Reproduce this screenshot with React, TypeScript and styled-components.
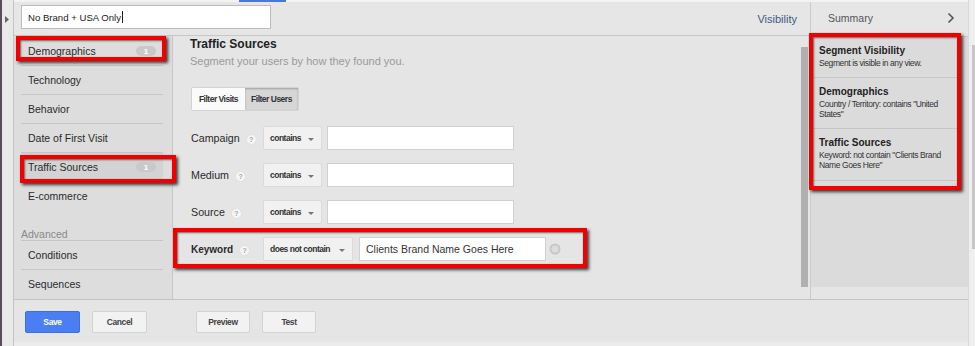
import React from "react";
import styled, { createGlobalStyle } from "styled-components";

const Global = createGlobalStyle`
  html, body {
    margin: 0;
    padding: 0;
    background: #e5e5e5;
    font-family: "Liberation Sans", Arial, sans-serif;
    width: 975px;
    height: 346px;
    overflow: hidden;
  }
  * { box-sizing: border-box; }
`;

const Frame = styled.div`
  display: flex;
  width: 975px;
  height: 346px;
`;

const SideStrip = styled.div`
  width: 14px;
  flex: none;
  background: #e9e9e9;
  border-left: 2px solid #5b4e5b;
  border-right: 1px solid #c4c4c4;
  padding: 9px 0 0 3px;
`;

const RightStrip = styled.div`
  width: 7px;
  flex: none;
  background: #efefef;
  border-left: 1px solid #dadada;
  padding: 45px 0 0 3px;
`;

const RightThumb = styled.div`
  width: 3px;
  height: 204px;
  background: #c6c6c6;
`;

const Window = styled.div`
  flex: 1;
  display: flex;
  flex-direction: column;
  min-width: 0;
`;

const TopEdge = styled.div`
  height: 2px;
  background: #f3f3f3;
  display: flex;
`;

const TabMarker = styled.div`
  margin-left: 225px;
  width: 47px;
  background: #4a78d8;
`;

const Body = styled.div`
  display: flex;
  height: 297px;
`;

const EditorArea = styled.div`
  width: 796px;
  display: flex;
  flex-direction: column;
`;

const TopBar = styled.div`
  height: 35px;
  border-bottom: 1px solid #c8c8c8;
  background: #e6e6e6;
  display: flex;
  justify-content: space-between;
  align-items: flex-start;
  padding: 3px 13px 0 7px;
`;

const NameField = styled.div`
  width: 250px;
  height: 24px;
  background: #fff;
  border: 1px solid #bcbcbc;
  display: flex;
  align-items: center;
  padding-left: 6px;
  font-size: 9.6px;
  color: #222;
`;

const Caret = styled.span`
  display: inline-block;
  width: 1px;
  height: 12px;
  background: #222;
  margin-left: 1px;
`;

const VisibilityLink = styled.span`
  font-size: 11px;
  color: #3c5a84;
  margin-top: 8px;
`;

const Content = styled.div`
  flex: 1;
  display: flex;
`;

const Nav = styled.div`
  width: 159px;
  flex: none;
  background: #dddddd;
  border-right: 1px solid #c8c8c8;
  padding-top: 1px;
`;

const NavItem = styled.div<{ $selected?: boolean; $last?: boolean }>`
  position: relative;
  height: 29px;
  margin: 0 9px 0 7px;
  padding: 0 7px;
  display: flex;
  align-items: center;
  justify-content: space-between;
  font-size: 10.5px;
  color: #2a2a2a;
  background: ${(p) => (p.$selected ? "#d3d3d3" : "transparent")};
  border-bottom: 1px solid ${(p) => (p.$last ? "transparent" : "#c6c6c6")};
`;

const NavSectionLabel = styled.div`
  margin: 0 9px 0 7px;
  padding-top: 17px;
  line-height: 12px;
  font-size: 10.5px;
  color: #8a8a8a;
  border-bottom: 1px solid #c6c6c6;
`;

const Badge = styled.span`
  width: 20px;
  height: 10px;
  border-radius: 5px;
  background: #c9c9c9;
  color: #fff;
  font-size: 8px;
  font-weight: bold;
  display: flex;
  align-items: center;
  justify-content: center;
`;

const RedMark = styled.span<{ $top: number; $left: number; $width: number; $height: number }>`
  position: absolute;
  top: ${(p) => p.$top}px;
  left: ${(p) => p.$left}px;
  width: ${(p) => p.$width}px;
  height: ${(p) => p.$height}px;
  border: 4px solid #f20000;
  box-shadow: 2px 2px 3px rgba(0, 0, 0, 0.75), inset 1px 1px 2px rgba(0, 0, 0, 0.55);
  pointer-events: none;
  z-index: 2;
`;

const Editor = styled.div`
  flex: 1;
  display: flex;
`;

const EditorMain = styled.div`
  flex: 1;
  padding: 1px 0 0 18px;
`;

const Title = styled.div`
  font-size: 12px;
  font-weight: bold;
  line-height: 14px;
  color: #222;
  margin-left: -1px;
`;

const Subtitle = styled.div`
  font-size: 11px;
  line-height: 14px;
  margin-top: 3px;
  color: #9a9a9a;
  margin-left: -1px;
`;

const FilterToggle = styled.div`
  display: inline-flex;
  margin-top: 19px;
  border: 1px solid #d3d3d3;
  border-radius: 2px;
`;

const FilterButton = styled.span<{ $active?: boolean }>`
  width: 53px;
  height: 22px;
  display: flex;
  align-items: center;
  justify-content: center;
  font-size: 8.5px;
  font-weight: bold;
  letter-spacing: -0.5px;
  color: #333;
  background: ${(p) => (p.$active ? "#d6d6d6" : "#fafafa")};
  box-shadow: ${(p) => (p.$active ? "inset 0 1px 2px rgba(0,0,0,0.25)" : "none")};
`;

const Fields = styled.div`
  display: flex;
  flex-direction: column;
  gap: 13px;
  margin-top: 15px;
`;

const FieldRow = styled.div`
  position: relative;
  display: flex;
  align-items: center;
  height: 24px;
`;

const FieldLabel = styled.div<{ $strong?: boolean }>`
  width: 72px;
  flex: none;
  display: flex;
  align-items: center;
  font-size: ${(p) => (p.$strong ? "10px" : "10.7px")};
  font-weight: ${(p) => (p.$strong ? "bold" : "normal")};
  color: #2a2a2a;
`;

const HelpIcon = styled.span`
  width: 11px;
  height: 11px;
  border-radius: 50%;
  background: #f6f6f6;
  border: 1px solid #e0e0e0;
  color: #a8a8a8;
  font-size: 7px;
  font-weight: bold;
  display: inline-flex;
  align-items: center;
  justify-content: center;
  margin: 3px 0 0 6px;
`;

const SelectBox = styled.div<{ $width: number }>`
  width: ${(p) => p.$width}px;
  height: 24px;
  flex: none;
  background: #f1f1f1;
  border: 1px solid #dadada;
  border-radius: 2px;
  display: flex;
  align-items: center;
  justify-content: space-between;
  padding: 0 7px 0 6px;
  font-size: 8.5px;
  font-weight: bold;
  letter-spacing: -0.5px;
  color: #333;
`;

const SelectArrow = styled.span`
  width: 0;
  height: 0;
  border-left: 3px solid transparent;
  border-right: 3px solid transparent;
  border-top: 3px solid #777;
  margin-top: 2px;
`;

const TextBox = styled.div<{ $gap: number }>`
  width: 187px;
  height: 24px;
  flex: none;
  margin-left: ${(p) => p.$gap}px;
  background: #fff;
  border: 1px solid #d0d0d0;
  display: flex;
  align-items: center;
  padding-left: 6px;
  font-size: 10.5px;
  color: #333;
`;

const RemoveIcon = styled.svg`
  margin-left: 3px;
  flex: none;
`;

const ScrollTrack = styled.div`
  width: 9px;
  flex: none;
  padding: 11px 2px 12px 0;
  display: flex;
`;

const ScrollThumb = styled.div`
  flex: 1;
  background: #b0b0b0;
`;

const SummaryColumn = styled.div`
  position: relative;
  width: 158px;
  flex: none;
  display: flex;
  flex-direction: column;
  border-left: 1px solid #cbcbcb;
`;

const SummaryHeader = styled.div`
  height: 35px;
  border-bottom: 1px solid #c8c8c8;
  background: #e6e6e6;
  display: flex;
  align-items: center;
  justify-content: space-between;
  padding: 0 13px 3px 17px;
  font-size: 10.5px;
  color: #555;
`;

const SummaryList = styled.div`
  flex: 1;
  margin-bottom: 12px;
  background: #dbdbdb;
`;

const SummaryItem = styled.div<{ $padBottom: number }>`
  margin: 0 7px 0 2px;
  padding: 8px 4px ${(p) => p.$padBottom}px 6px;
  border-bottom: 1px solid #c6c6c6;
`;

const SummaryTitle = styled.div`
  font-size: 10px;
  font-weight: bold;
  line-height: 12px;
  color: #222;
`;

const SummaryText = styled.div`
  margin-top: 1px;
  font-size: 8.5px;
  line-height: 10px;
  letter-spacing: -0.4px;
  color: #333;
`;

const Footer = styled.div`
  flex: 1;
  border-top: 1px solid #c3c3c3;
  border-bottom: 4px solid #ececec;
  background: #e5e5e5;
  display: flex;
  align-items: flex-start;
  padding: 11px 0 0 11px;
`;

const FooterButton = styled.span<{ $primary?: boolean; $gap: number; $width: number }>`
  width: ${(p) => p.$width}px;
  height: 22px;
  margin-left: ${(p) => p.$gap}px;
  display: flex;
  align-items: center;
  justify-content: center;
  border-radius: 2px;
  font-size: 8.5px;
  font-weight: bold;
  letter-spacing: -0.4px;
  color: ${(p) => (p.$primary ? "#fff" : "#444")};
  background: ${(p) => (p.$primary ? "#4b7ef2" : "#f2f2f2")};
  border: 1px solid ${(p) => (p.$primary ? "#3d6fe0" : "#d2d2d2")};
`;

const navMain = ["Demographics", "Technology", "Behavior", "Date of First Visit", "Traffic Sources", "E-commerce"];

const fields = [
  { label: "Campaign", op: "contains" },
  { label: "Medium", op: "contains" },
  { label: "Source", op: "contains" },
];

export default function App() {
  return (
    <>
      <Global />
      <Frame>
        <SideStrip>
          <svg width="5" height="7" viewBox="0 0 5 7">
            <polygon points="0,0 4,3.5 0,7" fill="#666" />
          </svg>
        </SideStrip>
        <Window>
          <TopEdge>
            <TabMarker />
          </TopEdge>
          <Body>
            <EditorArea>
              <TopBar>
                <NameField>
                  No Brand + USA Only
                  <Caret />
                </NameField>
                <VisibilityLink>Visibility</VisibilityLink>
              </TopBar>
              <Content>
                <Nav>
                  {navMain.map((name, i) => (
                    <NavItem key={name} $selected={name === "Traffic Sources"} $last={i === navMain.length - 1}>
                      {name}
                      {(name === "Demographics" || name === "Traffic Sources") && <Badge>1</Badge>}
                      {name === "Demographics" && <RedMark $top={-1} $left={-5} $width={150} $height={25} />}
                      {name === "Traffic Sources" && <RedMark $top={2} $left={-1} $width={156} $height={28} />}
                    </NavItem>
                  ))}
                  <NavSectionLabel>Advanced</NavSectionLabel>
                  <NavItem>Conditions</NavItem>
                  <NavItem $last>Sequences</NavItem>
                </Nav>
                <Editor>
                  <EditorMain>
                    <Title>Traffic Sources</Title>
                    <Subtitle>Segment your users by how they found you.</Subtitle>
                    <FilterToggle>
                      <FilterButton>Filter Visits</FilterButton>
                      <FilterButton $active>Filter Users</FilterButton>
                    </FilterToggle>
                    <Fields>
                      {fields.map((f) => (
                        <FieldRow key={f.label}>
                          <FieldLabel>
                            {f.label}
                            <HelpIcon>?</HelpIcon>
                          </FieldLabel>
                          <SelectBox $width={59}>
                            {f.op}
                            <SelectArrow />
                          </SelectBox>
                          <TextBox $gap={5} />
                        </FieldRow>
                      ))}
                      <FieldRow>
                        <FieldLabel $strong>
                          Keyword
                          <HelpIcon>?</HelpIcon>
                        </FieldLabel>
                        <SelectBox $width={90}>
                          does not contain
                          <SelectArrow />
                        </SelectBox>
                        <TextBox $gap={6}>Clients Brand Name Goes Here</TextBox>
                        <RemoveIcon width="12" height="12" viewBox="0 0 12 12">
                          <circle cx="6" cy="6" r="4.5" fill="#dcdcdc" stroke="#c6c6c6" strokeWidth="2" />
                        </RemoveIcon>
                        <RedMark $top={-9} $left={-18} $width={414} $height={40} />
                      </FieldRow>
                    </Fields>
                  </EditorMain>
                  <ScrollTrack>
                    <ScrollThumb />
                  </ScrollTrack>
                </Editor>
              </Content>
            </EditorArea>
            <SummaryColumn>
              <SummaryHeader>
                Summary
                <svg width="8" height="12" viewBox="0 0 8 12">
                  <polyline points="1.5,1.5 6,6 1.5,10.5" fill="none" stroke="#555" strokeWidth="1.6" />
                </svg>
              </SummaryHeader>
              <SummaryList>
                <SummaryItem $padBottom={9}>
                  <SummaryTitle>Segment Visibility</SummaryTitle>
                  <SummaryText>Segment is visible in any view.</SummaryText>
                </SummaryItem>
                <SummaryItem $padBottom={9}>
                  <SummaryTitle>Demographics</SummaryTitle>
                  <SummaryText>Country / Territory: contains "United States"</SummaryText>
                </SummaryItem>
                <SummaryItem $padBottom={10}>
                  <SummaryTitle>Traffic Sources</SummaryTitle>
                  <SummaryText>Keyword: not contain "Clients Brand Name Goes Here"</SummaryText>
                </SummaryItem>
              </SummaryList>
              <RedMark $top={31} $left={-2} $width={152} $height={157} />
            </SummaryColumn>
          </Body>
          <Footer>
            <FooterButton $primary $gap={0} $width={55}>Save</FooterButton>
            <FooterButton $gap={12} $width={55}>Cancel</FooterButton>
            <FooterButton $gap={49} $width={54}>Preview</FooterButton>
            <FooterButton $gap={12} $width={54}>Test</FooterButton>
          </Footer>
        </Window>
        <RightStrip>
          <RightThumb />
        </RightStrip>
      </Frame>
    </>
  );
}
